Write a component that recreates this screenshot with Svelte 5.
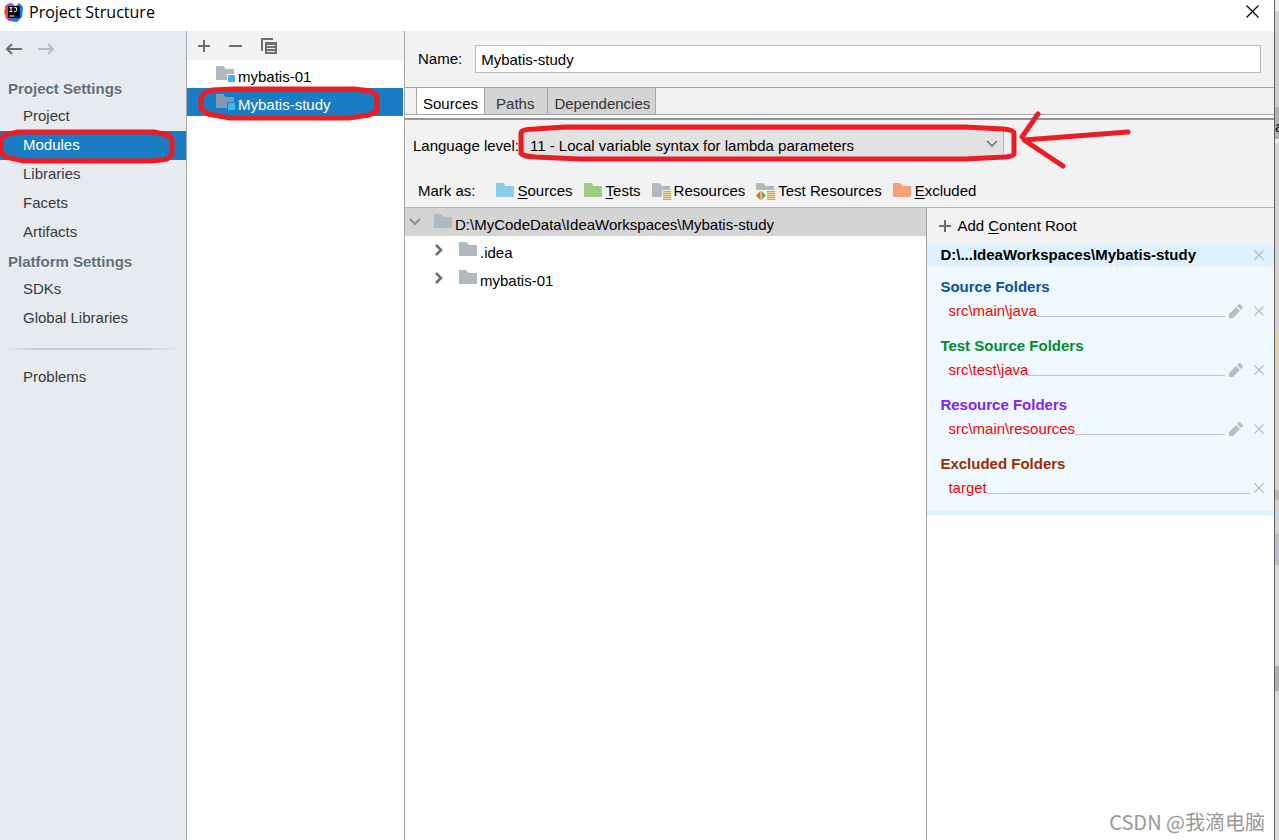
<script lang="ts">
	type Mark = 'sources' | 'tests' | 'resources' | 'test-resources' | 'excluded';

	const projectItems = ['Project', 'Modules', 'Libraries', 'Facets', 'Artifacts'];
	const platformItems = ['SDKs', 'Global Libraries'];
	const modules = ['mybatis-01', 'Mybatis-study'];
	const tabs = ['Sources', 'Paths', 'Dependencies'];

	const marks: { kind: Mark; key: string; label: string }[] = [
		{ kind: 'sources', key: 'S', label: 'ources' },
		{ kind: 'tests', key: 'T', label: 'ests' },
		{ kind: 'resources', key: '', label: 'Resources' },
		{ kind: 'test-resources', key: '', label: 'Test Resources' },
		{ kind: 'excluded', key: 'E', label: 'xcluded' }
	];

	const folders = [
		{ kind: 'source', title: 'Source Folders', path: 'src\\main\\java', editable: true },
		{ kind: 'test', title: 'Test Source Folders', path: 'src\\test\\java', editable: true },
		{ kind: 'resource', title: 'Resource Folders', path: 'src\\main\\resources', editable: true },
		{ kind: 'exclude', title: 'Excluded Folders', path: 'target', editable: false }
	];

	let page = $state('Modules');
	let selected = $state('Mybatis-study');
	let tab = $state('Sources');
	let name = $state('Mybatis-study');
</script>

{#snippet folder(kind: string)}
	<svg class="folder {kind}" width="20" height="18" viewBox="0 0 20 18" aria-hidden="true">
		<path class="shape" d="M0 1h7l3 3h8v11H0z" />
		{#if kind === 'module'}
			<path class="knock" d="M11 9h7v6h-7z" />
			<path fill="#40b6e0" d="M12 10h7v7h-7z" />
		{/if}
		{#if kind === 'resources' || kind === 'test-resources'}
			<path class="knock" d="M10 8h8v7h-8z" />
			<path fill="#f3d9ab" d="M11 9h8v9h-8z" />
			<path fill="#dfa03c" d="M11 9h8v1h-8zM11 11h8v1h-8zM11 13h8v1h-8zM11 15h8v1h-8zM11 17h8v1h-8z" />
		{/if}
		{#if kind === 'test-resources'}
			<path class="knock" d="M0 8h11v7H0z" />
			<path fill="#f26522" d="M4.500 9v9L0 13.500z" />
			<path fill="#62b543" d="M5.500 9v9l4.500-4.500z" />
		{/if}
	</svg>
{/snippet}

{#snippet plus()}
	<svg width="14" height="14" viewBox="0 0 14 14" aria-hidden="true">
		<path d="M7 1v12M1 7h12" stroke="#6e6e6e" stroke-width="2" />
	</svg>
{/snippet}

{#snippet cross()}
	<svg width="10" height="10" viewBox="0 0 10 10" aria-hidden="true">
		<path d="M.5.5l9 9M9.500.5l-9 9" stroke="#b3bfc7" stroke-width="1.300" />
	</svg>
{/snippet}

<div class="screen">
	<div class="window">
		<header>
			<svg width="20" height="20" viewBox="0 0 20 20" aria-hidden="true">
				<path fill="#f97a12" d="M0 9l2-5 5 2-3 9-3-2z" />
				<path fill="#fe315d" d="M1 4l5-3 5 3-2 8-6 3-2-3z" />
				<path fill="#b74af7" d="M3 2l5-1 3 3-5 2z" />
				<path fill="#087cfa" d="M11 5l4-4 4 4-1 10-5 5-8-1-1-5z" />
				<path fill="#fe315d" d="M1 15l4-4 3 7-3 1z" />
				<path d="M4 4h12v12H4z" />
				<path d="M5.500 5.700h3M7 5.700v4M5.500 9.700h3M10 5.700h2.500v3q0 1-1.500 1h-1M5.500 14h5" fill="none" stroke="#fff" />
			</svg>
			<h1>Project Structure</h1>
			<button class="close" aria-label="Close">
				<svg width="13" height="13" viewBox="0 0 13 13"><path d="M.5.5l12 12M12.500.5l-12 12" stroke="#000" stroke-width="1.200" /></svg>
			</button>
		</header>

		<div class="body">
			<nav>
				<div class="history">
					<button aria-label="Back">
						<svg width="17" height="12" viewBox="0 0 17 12"><path d="M17 6H2M7 1L2 6l5 5" fill="none" stroke="#6e6e6e" stroke-width="2" /></svg>
					</button>
					<button aria-label="Forward">
						<svg width="17" height="12" viewBox="0 0 17 12"><path d="M0 6h15M10 1l5 5-5 5" fill="none" stroke="#b9bdc0" stroke-width="2" /></svg>
					</button>
				</div>
				<h2>Project Settings</h2>
				{#each projectItems as item}
					<button class="item" class:active={page === item} onclick={() => (page = item)}>{item}</button>
				{/each}
				<h2>Platform Settings</h2>
				{#each platformItems as item}
					<button class="item" class:active={page === item} onclick={() => (page = item)}>{item}</button>
				{/each}
				<hr />
				<button class="item" class:active={page === 'Problems'} onclick={() => (page = 'Problems')}>Problems</button>
			</nav>

			<section class="modules">
				<div class="toolbar">
					<button aria-label="Add">{@render plus()}</button>
					<button aria-label="Remove">
						<svg width="14" height="14" viewBox="0 0 14 14"><path d="M0 7h13" stroke="#6e6e6e" stroke-width="2" /></svg>
					</button>
					<button aria-label="Copy">
						<svg width="16" height="16" viewBox="0 0 16 16">
							<path d="M1 13V1h11" fill="none" stroke="#6e6e6e" stroke-width="2" />
							<path d="M4 4h12v12H4z" fill="#6e6e6e" />
							<path d="M6 7.500h8M6 10.500h8M6 13.500h8" stroke="#f2f2f2" />
						</svg>
					</button>
				</div>
				{#each modules as module}
					<button class="module-row" class:active={selected === module} onclick={() => (selected = module)}>
						{@render folder('module')}
						<span>{module}</span>
					</button>
				{/each}
			</section>

			<main>
				<div class="name">
					<label for="name">Name:</label>
					<input id="name" type="text" bind:value={name} />
				</div>

				<div class="tabs" role="tablist">
					{#each tabs as item}
						<button role="tab" aria-selected={tab === item} class:active={tab === item} onclick={() => (tab = item)}>{item}</button>
					{/each}
				</div>

				<div class="level">
					<label for="level">Language level:</label>
					<div class="select">
						<select id="level">
							<option>11 - Local variable syntax for lambda parameters</option>
						</select>
						<svg width="12" height="8" viewBox="0 0 12 8" aria-hidden="true"><path d="M1 1l5 5 5-5" fill="none" stroke="#6e6e6e" stroke-width="1.500" /></svg>
					</div>
				</div>

				<div class="marks">
					<span class="caption">Mark as:</span>
					{#each marks as mark}
						<button>
							{@render folder(mark.kind)}
							<span>{#if mark.key}<u>{mark.key}</u>{/if}{mark.label}</span>
						</button>
					{/each}
				</div>

				<div class="content">
					<div class="tree">
						<button class="root">
							<svg width="12" height="8" viewBox="0 0 12 8" aria-hidden="true"><path d="M1 1l5 5 5-5" fill="none" stroke="#8c8c8c" stroke-width="2" /></svg>
							{@render folder('plain')}
							<span>D:\MyCodeData\IdeaWorkspaces\Mybatis-study</span>
						</button>
						{#each ['.idea', 'mybatis-01'] as child}
							<button class="child">
								<svg width="8" height="12" viewBox="0 0 8 12" aria-hidden="true"><path d="M1 1l5 5-5 5" fill="none" stroke="#6e6e6e" stroke-width="2.500" /></svg>
								{@render folder('plain')}
								<span>{child}</span>
							</button>
						{/each}
					</div>

					<aside>
						<button class="add">
							{@render plus()}
							<span>Add <u>C</u>ontent Root</span>
						</button>
						<div class="root-title">
							<strong>D:\...IdeaWorkspaces\Mybatis-study</strong>
							<button aria-label="Remove content root">{@render cross()}</button>
						</div>
						<div class="folders">
							{#each folders as item}
								<div class="group">
									<h3 class={item.kind}>{item.title}</h3>
									<div class="path">
										<span>{item.path}</span>
										<i></i>
										{#if item.editable}
											<button aria-label="Edit properties">
												<svg width="14" height="14" viewBox="0 0 14 14"><path fill="#b3bfc7" d="M0 14v-4l7-7 4 4-7 7zM8 2l2-2h1l3 3v1l-2 2z" /></svg>
											</button>
										{/if}
										<button aria-label="Remove folder">{@render cross()}</button>
									</div>
								</div>
							{/each}
						</div>
					</aside>
				</div>
			</main>
		</div>
	</div>
	<div class="behind"><span>a</span></div>

	<!-- hand-drawn highlights -->
	<svg class="ink" width="1140" height="180" viewBox="0 0 1140 180" aria-hidden="true">
		<path d="M4 135l14-3h136l14 3 4 4v16l-5 4-14 2H24l-18-4-5-4v-14z" />
		<path d="M204 93l8-3 22-1h120l17 2 6 5v15l-8 4-20 3H230l-22-4-7-5v-11z" />
		<path d="M521 133q0-4 14-4l30-2h400l38 2q11 1 11 4v21q0 2-9 3l-40 2H580l-45-2q-14-1-14-4z" />
		<path d="M1038 114l-16 23M1128 132l-104 8 39 26" />
	</svg>
	<div class="watermark">CSDN @我滴电脑</div>
</div>

<style>
	:global(body) {
		margin: 0;
	}

	.screen {
		position: relative;
		display: grid;
		grid-template-columns: 1fr 4px;
		min-height: 100vh;
		overflow: hidden;
		font: 15px/20px 'Liberation Sans', Arial, sans-serif;
		color: #000;
	}

	.window {
		display: flex;
		flex-direction: column;
		border-right: 1px solid #5f5f5f;
		background: #fff;
		min-width: 0;
	}

	button {
		display: flex;
		align-items: center;
		padding: 0;
		border: 0;
		background: none;
		font: inherit;
		color: inherit;
		text-align: left;
		white-space: nowrap;
	}

	svg {
		display: block;
		flex: none;
	}

	h1,
	h2,
	h3 {
		margin: 0;
		font-size: 15px;
	}

	header {
		display: flex;
		align-items: center;
		gap: 5px;
		height: 23px;
		padding: 0 15px 8px 4px;
	}

	h1 {
		flex: 1;
		font: 16px/20px 'Open Sans', 'Noto Sans', sans-serif;
	}

	.body {
		display: grid;
		grid-template-columns: 187px 218px 1fr;
		flex: 1;
	}

	nav {
		border-right: 1px solid #a5a8aa;
		background: #e6ebef;
	}

	.history {
		display: flex;
		gap: 16px;
		height: 36px;
		padding: 0 5px;
		margin-bottom: 7px;
	}

	nav h2 {
		padding: 2px 0 0 8px;
		line-height: 26px;
		color: #5f6e7d;
		text-shadow: 0 1px #fff;
	}

	.item {
		width: 100%;
		height: 29px;
		padding: 0 0 2px 23px;
		color: #3a3a3a;
	}

	.item.active {
		background: #1a7dc4;
		color: #fff;
	}

	hr {
		height: 2px;
		margin: 15px 9px 13px 3px;
		border: 0;
		background: linear-gradient(90deg, transparent, #c9cccf 18%, #c9cccf 82%, transparent);
	}

	.modules {
		border-right: 1px solid #a5a5a5;
	}

	.toolbar {
		display: flex;
		align-items: center;
		gap: 18px;
		height: 29px;
		padding-left: 10px;
		background: #f2f2f2;
	}

	.module-row {
		width: calc(100% - 1px);
		height: 28px;
		padding-left: 29px;
		gap: 2px;
	}

	.module-row span {
		padding-top: 6px;
	}

	.module-row.active {
		background: #1a7dc4;
		color: #fff;
	}

	.folder .shape {
		fill: #aeb9c0;
	}

	.folder .knock {
		fill: #f2f2f2;
	}

	.module .knock {
		fill: #fff;
	}

	.active .shape {
		fill: #7f9cb2;
	}

	.active .knock {
		fill: #1a7dc4;
	}

	.folder.sources .shape {
		fill: #87cfe8;
	}

	.folder.tests .shape {
		fill: #9ccc85;
	}

	.folder.excluded .shape {
		fill: #f2a077;
	}

	main {
		display: flex;
		flex-direction: column;
		min-width: 0;
		background: #f2f2f2;
	}

	.name {
		display: flex;
		align-items: center;
		gap: 13px;
		padding: 14px 13px 14px;
	}

	.name input {
		flex: 1;
		box-sizing: border-box;
		height: 28px;
		padding: 0 5px;
		border: 1px solid #bcbcbc;
		background: #fff;
		font: inherit;
	}

	.tabs {
		display: flex;
		height: 26px;
		padding-left: 11px;
		border-top: 1px solid #a5a5a5;
		border-bottom: 1px solid #a5a5a5;
	}

	.tabs button {
		padding: 6px 5px 0 6px;
		border-right: 1px solid #a5a5a5;
		background: #d4d4d4;
		color: #333;
	}

	.tabs button:nth-child(2) {
		padding: 6px 13px 0 11px;
	}

	.tabs .active {
		padding-right: 6px;
		border-left: 1px solid #a5a5a5;
		background: #fff;
		color: #000;
	}

	.level {
		display: flex;
		align-items: center;
		gap: 4px;
		padding: 9px 8px;
		border-top: 2px solid #969494;
		box-shadow: 0 -3px #fff;
		margin-top: 3px;
	}

	.level label {
		padding-top: 4px;
	}

	.select {
		display: flex;
		align-items: center;
		width: 481px;
	}

	select {
		flex: 1;
		height: 30px;
		padding: 4px 6px 0;
		appearance: none;
		border: 1px solid #b5b5b5;
		border-radius: 0;
		background: #e2e2e2;
		color: #000;
		font: inherit;
	}

	.select svg {
		margin-left: -18px;
		margin-right: 6px;
		pointer-events: none;
	}

	.marks {
		display: flex;
		align-items: center;
		gap: 11px;
		height: 32px;
		padding: 7px 13px 0;
	}

	.marks button {
		gap: 2px;
	}

	.marks .caption {
		margin-right: 9px;
	}

	u {
		text-underline-offset: 2px;
	}

	.content {
		display: grid;
		grid-template-columns: minmax(0, 3fr) minmax(0, 2fr);
		flex: 1;
		border-top: 1px solid #b4b4b4;
	}

	.tree {
		background: #fff;
	}

	.tree button {
		width: 100%;
		height: 28px;
	}

	.tree span {
		padding-top: 5px;
	}

	.tree .root {
		gap: 1px;
		padding-left: 4px;
		background: #d4d4d4;
	}

	.tree .root svg:first-child {
		margin-right: 12px;
	}

	.tree .child {
		gap: 1px;
		padding-left: 30px;
	}

	.tree .child svg:first-child {
		margin-right: 15px;
	}

	aside {
		border-left: 1px solid #a5a5a5;
		background: #fff;
	}

	.add {
		gap: 5px;
		width: 100%;
		height: 35px;
		padding-left: 11px;
		background: #f2f2f2;
	}

	.root-title {
		display: flex;
		align-items: center;
		justify-content: space-between;
		height: 23px;
		padding: 0 10px 0 13px;
		background: #def1ff;
	}

	.folders {
		padding: 9px 10px 0 13px;
		border-bottom: 4px solid #def1ff;
		background: #eff8ff;
	}

	.group {
		padding-bottom: 11px;
	}

	h3 {
		line-height: 24px;
	}

	h3.source {
		color: #0a50a1;
	}

	h3.test {
		color: #008c2e;
	}

	h3.resource {
		color: #8224f2;
	}

	h3.exclude {
		color: #992e00;
	}

	.path {
		display: flex;
		align-items: center;
		height: 24px;
		padding-left: 8px;
		color: #f00;
	}

	.path i {
		flex: 1;
		height: 11px;
		margin-right: 4px;
		border-bottom: 1px solid #c4c4c4;
	}

	.path button[aria-label^='Edit'] {
		margin-right: 11px;
	}

	.behind {
		overflow: hidden;
		padding-top: 117px;
		background: linear-gradient(
			#ededed 11px,
			#d0d0d0 11px 107px,
			#b2b2b2 107px 139px,
			#eee 139px 143px,
			#d3d3d3 143px 331px,
			#ddd5b0 331px 365px,
			#d3d3d3 365px 490px,
			#b8b8b8 490px 500px,
			#d3d3d3 500px 534px,
			#b9bec8 534px 565px,
			#d8d8d8 565px 666px,
			#b0b0b0 666px 691px,
			#d8d8d8 691px
		);
	}

	.ink {
		position: absolute;
		top: 0;
		left: 0;
		fill: none;
		stroke: #ed1c24;
		stroke-width: 5;
		stroke-linecap: round;
		stroke-linejoin: round;
		pointer-events: none;
	}

	.watermark {
		position: absolute;
		right: 14px;
		bottom: 4px;
		color: #999;
		font: 20px/28px 'Noto Sans CJK SC', 'Noto Sans', sans-serif;
		text-shadow: 1px 1px #fff;
	}
</style>
